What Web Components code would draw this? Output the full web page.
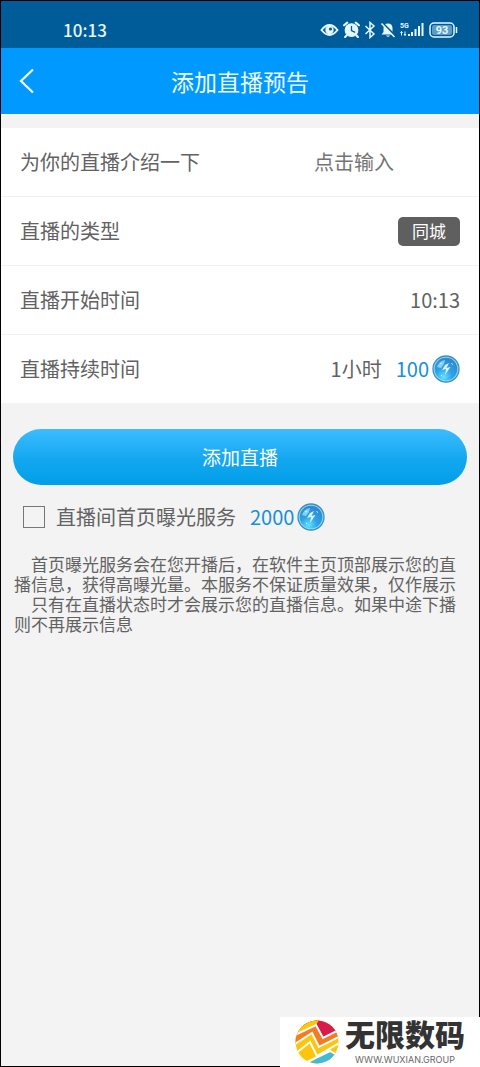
<!DOCTYPE html>
<html lang="zh-CN">
<head>
<meta charset="utf-8">
<meta name="viewport" content="width=device-width, initial-scale=1">
<title>添加直播预告</title>
<style>
html,body{margin:0;height:100%}
body{font-family:"Noto Sans CJK SC","Noto Sans",sans-serif;color:#626262;background:#f3f3f3}
</style>
</head>
<body>
<live-page></live-page>
<script>
const define = (name, html) => customElements.define(name, class extends HTMLElement {
  constructor() {
    super();
    const t = document.createElement('template');
    t.innerHTML = html;
    this.attachShadow({mode: 'open'}).append(t.content.cloneNode(true));
  }
});

define('status-bar', `
<style>
:host{display:flex;align-items:center;justify-content:space-between;height:47px;padding:10px 21px 0 62px;box-sizing:border-box;background:#005c98;color:#e6f7ff;font-size:17px;line-height:24px;font-weight:500}
.icons{display:flex;align-items:center;gap:4px}
svg{display:block}
</style>
<span>10:13</span>
<div class="icons">
<svg width="19" height="14" viewBox="0 0 18 14" fill="none" stroke="#e6f7ff"><path d="M1 7Q9-3 17 7Q9 17 1 7Z" stroke-width="2"/><circle cx="9" cy="7" r="4.200" fill="#e6f7ff" stroke="none"/><circle cx="10" cy="6" r="1.600" fill="#005c98" stroke="none"/></svg>
<svg width="17" height="17" viewBox="0 0 16 16" fill="none" stroke="#e6f7ff" stroke-linecap="round"><circle cx="8" cy="8.500" r="6" fill="#e6f7ff"/><path d="M1 4l3-2.500M15 4l-3-2.500M3.500 13.500L2 15M12.500 13.500L14 15" stroke-width="2"/><path d="M8 5v4l3 1.500" stroke="#005c98" stroke-width="1.200"/></svg>
<svg width="12" height="18" viewBox="0 0 12 18" fill="none" stroke="#e6f7ff" stroke-width="1.500"><path d="M1.500 5l8.500 8-4 3.500v-15l4 3.500-8.500 8"/></svg>
<svg width="16" height="16" viewBox="0 0 15 16"><path d="M7.500 1.500q4.500 0 4.500 5v3.500l2 2.500H1l2-2.500V6.500q0-5 4.500-5zM5.500 13.500h4q-2 2.500-4 0z" fill="#e6f7ff"/><path d="M1 0l14 14" stroke="#005c98" stroke-width="2"/><path d="M1 1.500l13 13.500" stroke="#e6f7ff" stroke-width="1.600"/></svg>
<svg width="24" height="17" viewBox="0 0 24 17" fill="#e6f7ff"><path d="M8 13h2v2H8zM11 11h2v4h-2zM14.500 8h2v7h-2zM18 5h2v10h-2zM21.500 2h2v13h-2z"/><path d="M1.500 10.500v4M0.500 12l1-1.500 1 1.500M5 10.500v4M4 13l1 1.500L6 13" fill="none" stroke="#e6f7ff"/><text x="0" y="7" font-size="7" font-weight="700" font-family="Roboto,sans-serif">5G</text></svg>
<svg width="30" height="16" viewBox="0 0 30 16"><rect x="2" y="1" width="24" height="14" rx="4" fill="none" stroke="#e6f7ff" stroke-width="1.500"/><rect x="4" y="3" width="20" height="10" rx="2" fill="#5d9cc4"/><path d="M28.500 5v6" stroke="#e6f7ff" stroke-width="1.500"/><text x="14" y="12" text-anchor="middle" fill="#e6f7ff" font-size="11" font-weight="700" font-family="Roboto,sans-serif">93</text></svg>
</div>`);

define('nav-header', `
<style>
:host{display:grid;grid-template-columns:60px 1fr 60px;align-items:center;height:66px;background:#0099ff;color:#edfaff;border-bottom:1px solid #fff}
button{display:flex;align-items:center;height:48px;padding:0 0 0 18px;border:0;background:none}
h1{margin:0;text-align:center;font-size:23px;line-height:32px;font-weight:400}
</style>
<button aria-label="返回"><svg width="16" height="26" viewBox="0 0 16 26" fill="none" stroke="#f2fbff" stroke-width="2.300"><path d="M14 1.500L2 13l12 11.500"/></svg></button>
<h1><slot></slot></h1>`);

define('form-row', `
<style>
:host{display:flex;align-items:center;justify-content:space-between;height:68px;padding:0 19px;background:#fff;border-bottom:1px solid #f0f0f0;font-size:20px;line-height:28px}
:host(:last-of-type){border-bottom:0}
.value{display:flex;align-items:center}
</style>
<span><slot name="label"></slot></span><div class="value"><slot></slot></div>`);

define('energy-price', `
<style>
:host{display:inline-flex;align-items:center;gap:3px;color:#168fda;font-size:20px;line-height:28px}
svg{display:block}
</style>
<span><slot></slot></span>
<svg width="28" height="28" viewBox="0 0 28 28">
<defs><radialGradient id="g" cx=".4" cy=".85" r=".8"><stop offset="0" stop-color="#66e3fb"/><stop offset=".45" stop-color="#2fa3e8"/><stop offset="1" stop-color="#3088d0"/></radialGradient></defs>
<circle cx="14" cy="14" r="13" fill="#7fdcf7" stroke="#3f8fbd" stroke-width="1.300"/>
<circle cx="14" cy="14" r="11.300" fill="url(#g)"/>
<path d="M5 12q2-6 8-7l-1 4-3 4z" fill="#a8e9fb" opacity=".7"/>
<path d="M13 10l-3 5 4-1-1 6 5.500-8-4 1 2.500-5z" fill="#d6f5ff"/>
<path d="M8 9l2-1M19.500 8.500l1.500 1M9 20l1 1" stroke="#d5f7ff"/>
</svg>`);

define('primary-button', `
<style>
:host{display:block}
button{display:block;width:100%;height:56px;padding:0;border:0;border-radius:28px;background:linear-gradient(#3dbcff,#13a7f0 55%,#009fe8);color:#fff;font:400 19px/28px "Noto Sans CJK SC",sans-serif}
</style>
<button><slot></slot></button>`);

define('site-mark', `
<style>
:host{display:flex;align-items:center;width:200px;height:50px;box-sizing:border-box;padding-left:15px;gap:6px;background:#fff;color:#333}
svg{display:block;flex:none}
.words{display:flex;flex-direction:column;align-items:center}
b{font:900 30px/36px Roboto,"Noto Sans CJK SC",sans-serif}
small{font:400 9px/12px Inter,sans-serif;color:#666}
</style>
<svg width="44" height="44" viewBox="0 0 44 44">
<defs><clipPath id="c"><circle cx="22" cy="22" r="21.500"/></clipPath></defs>
<g clip-path="url(#c)"><path d="M0 0h44v44H0z" fill="#fec60b"/>
<path d="M0 0H44V18L24 28 17 14 0 24z" fill="#f47b20"/>
<path d="M10 0H44V10L27 18 21 6 6 11z" fill="#d91a4c"/>
<path d="M0 0H24L21 5 0 14z" fill="#fec60b"/>
<path d="M12 44L35 31 44 36V44z" fill="#42bad3"/>
<path d="M2 14L21 5 28 18 44 10M0 24L17 13 24 27 44 17M0 34L15 22 22 36 44 23M10 43L35 31 42 35" fill="none" stroke="#fff" stroke-width="2"/>
</g></svg>
<div class="words"><b>无限数码</b><small>WWW.WUXIAN.GROUP</small></div>`);

define('live-page', `
<style>
:host{display:flex;flex-direction:column;position:relative;min-height:100%;box-sizing:border-box;border:1px solid #000}
main{display:flex;flex-direction:column}
.rows{margin-top:13px}
input[type=text]{width:146px;padding:0;border:0;outline:0;background:none;font:inherit;color:#626262}
input::placeholder{color:#747474;opacity:1}
.plain{padding:0;border:0;background:none;font:inherit;color:inherit}
.tag{width:62px;height:29px;padding:0;border:0;border-radius:5px;background:#5f5f5f;color:#fff;font:400 17px/28px "Noto Sans CJK SC",sans-serif}
energy-price{margin-left:14px}
primary-button{margin:26px 12px 0}
.service{display:flex;align-items:center;margin:18px 22px 0;font-size:20px;line-height:28px}
.service input{appearance:none;width:22px;height:22px;margin:0 11px 0 0;border:1px solid #777;background:transparent}
.service input:checked{background:#168fda}
.notes{margin:24px 13px 0;font:400 17px/20px Roboto,"Noto Sans CJK SC",sans-serif}
.notes p{margin:0;text-indent:1em}
site-mark{position:absolute;right:-1px;bottom:-1px}
</style>
<status-bar></status-bar>
<nav-header>添加直播预告</nav-header>
<main>
<div class="rows">
<form-row><label slot="label" for="intro">为你的直播介绍一下</label><input id="intro" type="text" placeholder="点击输入"></form-row>
<form-row><span slot="label">直播的类型</span><button class="tag">同城</button></form-row>
<form-row><span slot="label">直播开始时间</span><button class="plain">10:13</button></form-row>
<form-row><span slot="label">直播持续时间</span><button class="plain">1小时</button><energy-price>100</energy-price></form-row>
</div>
<primary-button>添加直播</primary-button>
<div class="service"><input id="expose" type="checkbox"><label for="expose">直播间首页曝光服务</label><energy-price>2000</energy-price></div>
<div class="notes"><p>首页曝光服务会在您开播后，在软件主页顶部展示您的直播信息，获得高曝光量。本服务不保证质量效果，仅作展示</p><p>只有在直播状态时才会展示您的直播信息。如果中途下播则不再展示信息</p></div>
</main>
<site-mark></site-mark>`);
</script>
</body>
</html>
